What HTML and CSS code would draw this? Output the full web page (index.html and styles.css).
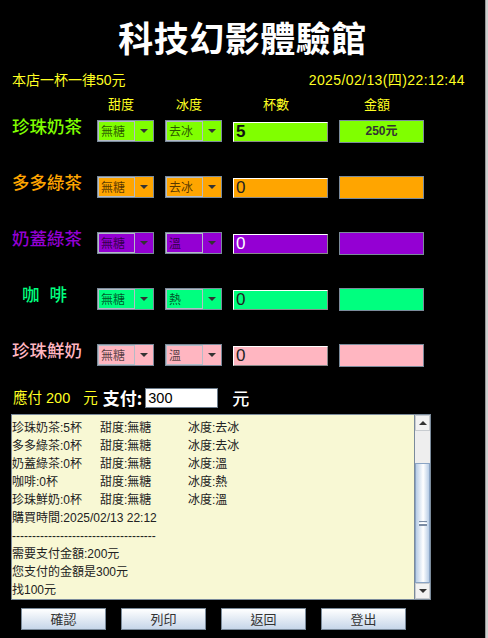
FILE: index.html
```html
<!DOCTYPE html>
<html lang="zh-Hant">
<head>
<meta charset="utf-8">
<title>科技幻影體驗館</title>
<link rel="stylesheet" href="styles.css">
</head>
<body>
<div class="screen">
  <div class="frame">
    <h1 class="title">科技幻影體驗館</h1>
    <div class="info">
      <span>本店一杯一律50元</span>
      <span class="date">2025/02/13(四)22:12:44</span>
    </div>
    <div class="grid head">
      <span></span><span>甜度</span><span>冰度</span><span>杯數</span><span>金額</span>
    </div>
    <div class="grid rows">
      <div class="label c1">珍珠奶茶</div>
      <div class="combo c1"><span class="val">無糖</span><span class="arr"></span></div>
      <div class="combo c1"><span class="val">去冰</span><span class="arr"></span></div>
      <div class="field c1 strong">5</div>
      <div class="amount c1">250元</div>

      <div class="label c2">多多綠茶</div>
      <div class="combo c2"><span class="val">無糖</span><span class="arr"></span></div>
      <div class="combo c2"><span class="val">去冰</span><span class="arr"></span></div>
      <div class="field c2">0</div>
      <div class="amount c2"></div>

      <div class="label c3">奶蓋綠茶</div>
      <div class="combo c3"><span class="val">無糖</span><span class="arr"></span></div>
      <div class="combo c3"><span class="val">溫</span><span class="arr"></span></div>
      <div class="field c3">0</div>
      <div class="amount c3"></div>

      <div class="label c4 spaced"><span>咖</span><span>啡</span></div>
      <div class="combo c4"><span class="val">無糖</span><span class="arr"></span></div>
      <div class="combo c4"><span class="val">熱</span><span class="arr"></span></div>
      <div class="field c4">0</div>
      <div class="amount c4"></div>

      <div class="label c5">珍珠鮮奶</div>
      <div class="combo c5"><span class="val">無糖</span><span class="arr"></span></div>
      <div class="combo c5"><span class="val">溫</span><span class="arr"></span></div>
      <div class="field c5">0</div>
      <div class="amount c5"></div>
    </div>

    <div class="pay">
      <span class="due">應付 200</span>
      <span class="due unit">元</span>
      <span class="paylabel">支付:</span>
      <span class="payinput">300</span>
      <span class="paylabel unit2">元</span>
    </div>

    <div class="log">
      <div class="logtext">
        <div class="item"><span>珍珠奶茶:5杯</span><span>甜度:無糖</span><span>冰度:去冰</span></div>
        <div class="item"><span>多多綠茶:0杯</span><span>甜度:無糖</span><span>冰度:去冰</span></div>
        <div class="item"><span>奶蓋綠茶:0杯</span><span>甜度:無糖</span><span>冰度:溫</span></div>
        <div class="item"><span>咖啡:0杯</span><span>甜度:無糖</span><span>冰度:熱</span></div>
        <div class="item"><span>珍珠鮮奶:0杯</span><span>甜度:無糖</span><span>冰度:溫</span></div>
        <div class="line">購買時間:2025/02/13 22:12</div>
        <div class="line">------------------------------------</div>
        <div class="line">需要支付金額:200元</div>
        <div class="line">您支付的金額是300元</div>
        <div class="line">找100元</div>
      </div>
      <div class="scrollbar">
        <div class="sbtn up"></div>
        <div class="track"></div>
        <div class="thumb"><span class="grip"></span></div>
        <div class="sbtn down"></div>
      </div>
    </div>

    <div class="buttons">
      <button class="btn">確認</button>
      <button class="btn">列印</button>
      <button class="btn">返回</button>
      <button class="btn">登出</button>
    </div>
  </div>
  <div class="edge"></div>
</div>
</body>
</html>
```
FILE: styles.css
```css
* { box-sizing: border-box; }
html, body {
  margin: 0;
  padding: 0;
  background: #000;
}
body {
  font-family: "Liberation Sans", "Noto Sans CJK TC", sans-serif;
  width: 488px;
  height: 638px;
  overflow: hidden;
}
.screen {
  display: flex;
  width: 488px;
  height: 638px;
}
.frame {
  width: 485px;
  height: 638px;
  background: #000;
  display: flex;
  flex-direction: column;
}
.edge {
  width: 3px;
  height: 638px;
  background: #cfcfcf;
  border-left: 1px solid #9a9a9a;
}
.title {
  margin: 0;
  padding-top: 17px;
  font-family: "Noto Sans CJK TC", sans-serif;
  font-size: 35px;
  line-height: 40px;
  font-weight: 700;
  color: #fff;
  text-align: center;
  letter-spacing: 0.5px;
}
.info {
  margin-top: 15px;
  display: flex;
  justify-content: space-between;
  padding: 0 20px 0 12px;
  color: #ffff22;
  font-size: 14px;
  line-height: 16px;
}
.date {
  letter-spacing: 0.4px;
}
.grid {
  display: grid;
  grid-template-columns: 86px 57px 57px 95px 85px;
  column-gap: 11px;
}
.head {
  margin-top: 8px;
  color: #ffff22;
  font-size: 13px;
  line-height: 16px;
  font-family: "Noto Sans CJK TC", sans-serif;
}
.head span {
  text-align: center;
  padding-right: 9px;
}
.rows {
  margin-top: 8px;
  grid-auto-rows: 23px;
  row-gap: 33px;
  align-items: start;
}
.c1 { --c: #80ff00; }
.c2 { --c: #ffa500; }
.c3 { --c: #9400d3; }
.c4 { --c: #00ff7f; }
.c5 { --c: #ffb6c1; }
.label {
  margin-top: -4px;
  padding-left: 12px;
  font-family: "Noto Sans CJK TC", sans-serif;
  font-size: 17.5px;
  line-height: 20px;
  font-weight: 500;
  color: var(--c);
  white-space: nowrap;
}
.label.spaced {
  padding-left: 22px;
  display: flex;
  gap: 10px;
}
.combo {
  display: flex;
  width: 57px;
  height: 22px;
  border: 1px solid #7b8b9b;
  background: var(--c);
}
.combo .val {
  flex: 1;
  border: 1px solid #b4bcc6;
  font-family: "Noto Sans CJK TC", sans-serif;
  font-size: 12px;
  line-height: 18px;
  padding-left: 2px;
  color: rgba(0, 0, 0, 0.68);
}
.combo .arr {
  width: 18px;
  display: flex;
  align-items: center;
  justify-content: center;
}
.combo .arr::before {
  content: "";
  border-left: 4px solid transparent;
  border-right: 4px solid transparent;
  border-top: 4px solid #333;
}
.field {
  margin-top: 2px;
  width: 95px;
  height: 20px;
  background: var(--c);
  border: 1px solid;
  border-color: #fff #8a8a8a #8a8a8a #fff;
  font-size: 17px;
  line-height: 18px;
  padding-left: 2px;
  color: #222;
}
.field.strong { font-weight: 700; color: #111; }
.field.c3 { color: #fff; }
.amount {
  width: 85px;
  height: 23px;
  background: var(--c);
  border: 1px solid #7b8b9b;
  font-size: 12px;
  line-height: 21px;
  font-weight: 700;
  text-align: center;
  color: #333;
  font-family: "Liberation Sans", "Noto Sans CJK TC", sans-serif;
}
.pay {
  margin-top: 21px;
  height: 20px;
  display: flex;
  align-items: center;
  padding-left: 13px;
}
.due {
  color: #ffff22;
  font-size: 14.5px;
  line-height: 20px;
}
.due.unit { margin-left: 13px; }
.paylabel {
  margin-left: 5px;
  color: #fff;
  font-size: 17px;
  font-weight: 700;
  line-height: 20px;
  font-family: "Noto Sans CJK TC", sans-serif;
}
.payinput {
  margin-left: 3px;
  width: 73px;
  height: 20px;
  background: #fff;
  border: 1px solid #6b7b8b;
  color: #000;
  font-size: 14.5px;
  line-height: 18px;
  padding-left: 2px;
}
.paylabel.unit2 {
  margin-left: 14px;
  font-weight: 500;
}
.log {
  margin-top: 6px;
  margin-left: 11px;
  width: 420px;
  height: 186px;
  border: 1px solid #7b8b9b;
  background: #f8f8d4;
  display: flex;
}
.logtext {
  flex: 1;
  padding-top: 4px;
  font-size: 12px;
  line-height: 18px;
  color: #222;
  white-space: nowrap;
  overflow: hidden;
}
.item {
  display: grid;
  grid-template-columns: 88px 88px 1fr;
}
.scrollbar {
  width: 16px;
  border-left: 1px solid #7b8b9b;
  display: flex;
  flex-direction: column;
  background: #eeeeee;
}
.sbtn {
  height: 16px;
  background: #f2f2f2;
  border: 1px solid #c8ccd0;
  display: flex;
  align-items: center;
  justify-content: center;
}
.sbtn.up::before {
  content: "";
  border-left: 4px solid transparent;
  border-right: 4px solid transparent;
  border-bottom: 4px solid #333;
}
.sbtn.down::before {
  content: "";
  border-left: 4px solid transparent;
  border-right: 4px solid transparent;
  border-top: 4px solid #333;
}
.track {
  height: 32px;
  background: #eeeeee;
}
.thumb {
  flex: 1;
  border: 1px solid #8aa4c4;
  background: linear-gradient(to right, #b8cde6, #ffffff 55%, #b8cde6);
  display: flex;
  align-items: center;
  justify-content: center;
}
.grip {
  width: 8px;
  height: 5px;
  border-top: 1px solid #7b8ca4;
  border-bottom: 1px solid #7b8ca4;
  background: linear-gradient(#fff 0 1px, #7b8ca4 1px 2px, #fff 2px);
  background-size: 100% 2px;
  background-repeat: no-repeat;
  background-position: 0 1px;
}
.buttons {
  margin-top: 8px;
  padding-left: 21px;
  display: flex;
  gap: 15px;
}
.btn {
  width: 85px;
  height: 22px;
  margin: 0;
  padding: 0;
  border: 1px solid #7b8b9b;
  background: linear-gradient(#ffffff, #c6d6e9);
  font-family: "Noto Sans CJK TC", sans-serif;
  font-size: 13px;
  line-height: 20px;
  color: #333;
}
```
